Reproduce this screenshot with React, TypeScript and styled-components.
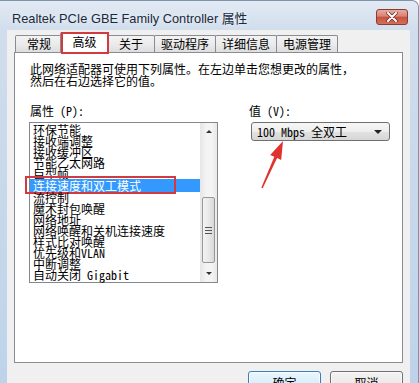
import styled, { createGlobalStyle } from 'styled-components';

const GlobalStyles = createGlobalStyle`
  body {
    margin: 0;
    background: #ffffff;
  }
`;

const uiFont = `"Noto Sans Mono CJK SC", "Noto Sans CJK SC", "Liberation Mono", monospace`;

const Window = styled.div`
  width: 419px;
  height: 383px;
  box-sizing: border-box;
  overflow: hidden;
  display: flex;
  flex-direction: column;
  border-top: 1px solid #7f93ad;
  border-right: 1px solid #7f93ad;
  border-top-right-radius: 7px;
  background: linear-gradient(to bottom, #e2eaf4 0px, #d0ddec 30px, #bed3ea 100%);
  font-family: ${uiFont};
`;

const TitleBar = styled.div`
  flex: none;
  height: 29px;
  box-sizing: border-box;
  padding: 3px 10px 0 12px;
  display: flex;
  align-items: center;
  justify-content: space-between;
`;

const Caption = styled.span`
  font-family: "Liberation Sans", "Noto Sans CJK SC", sans-serif;
  font-size: 12.8px;
  color: #1b2a3d;
  text-shadow: 0 0 6px rgba(255, 255, 255, 0.9);
`;

const CloseButton = styled.div`
  width: 32px;
  height: 16px;
  box-sizing: border-box;
  border: 1px solid #8c3a33;
  border-radius: 3px;
  background: linear-gradient(to bottom, #e8aaa0 0%, #d98373 45%, #c6503d 50%, #d66f59 100%);
  display: flex;
  align-items: center;
  justify-content: center;
`;

const Client = styled.div`
  flex: 1;
  margin: 0 8px 0 7px;
  background: #f0f0f0;
  display: flex;
  flex-direction: column;
`;

const TabRow = styled.div`
  height: 22px;
  flex: none;
  padding-left: 8px;
  display: flex;
  align-items: flex-end;
  position: relative;
  z-index: 1;
`;

const Tab = styled.div<{ $active?: boolean; $marked?: boolean }>`
  position: relative;
  box-sizing: border-box;
  min-width: ${p => (p.$active ? '49px' : '48px')};
  height: ${p => (p.$active ? '21px' : '17px')};
  margin: ${p => (p.$active ? '0 -2px -1px -2px' : '0 -1px 0 0')};
  padding: 0 6px;
  border: 1px solid #898c95;
  border-bottom: none;
  border-radius: 2px 2px 0 0;
  background: ${p =>
    p.$active ? '#ffffff' : 'linear-gradient(to bottom, #f3f3f3 0%, #ebebeb 50%, #dedede 100%)'};
  z-index: ${p => (p.$active ? 2 : 0)};
  font-size: 12px;
  line-height: ${p => (p.$active ? '18px' : '15px')};
  text-align: center;
  color: #000;
  white-space: nowrap;

  ${p =>
    p.$marked &&
    `
    &::after {
      content: '';
      position: absolute;
      top: -1px;
      left: 0;
      right: -1px;
      bottom: -1px;
      border: 2px solid #d23a3f;
    }
  `}
`;

const Panel = styled.div`
  height: 311px;
  flex: none;
  box-sizing: border-box;
  margin: 0 7px;
  border: 1px solid #898c95;
  background: #ffffff;
  padding: 10px 14px 0 15px;
`;

const Description = styled.p`
  margin: 0;
  font-size: 12px;
  line-height: 12px;
  color: #000;
  white-space: nowrap;
`;

const Fields = styled.div`
  margin-top: 18px;
  display: grid;
  grid-template-columns: 188px 1fr;
  column-gap: 31px;
`;

const Column = styled.div`
  position: relative;
  display: flex;
  flex-direction: column;
  gap: 5px;
`;

const FieldLabel = styled.div`
  font-size: 12px;
  line-height: 12px;
  color: #000;
`;

const ListBox = styled.div`
  margin-left: -1px;
  height: 161px;
  box-sizing: border-box;
  border: 1px solid #828790;
  background: #fff;
  display: flex;
`;

const Items = styled.div`
  flex: 1;
  padding-top: 1px;
`;

const Item = styled.div<{ $selected?: boolean; $marked?: boolean }>`
  position: relative;
  height: ${p => (p.$selected ? '13px' : '11px')};
  line-height: ${p => (p.$selected ? '13px' : '11px')};
  padding-left: 3px;
  font-size: 12px;
  white-space: nowrap;
  color: ${p => (p.$selected ? '#ffffff' : '#000000')};
  background: ${p => (p.$selected ? '#3399ff' : 'transparent')};

  ${p =>
    p.$marked &&
    `
    &::after {
      content: '';
      position: absolute;
      top: -3px;
      bottom: -2px;
      left: -5px;
      right: 24px;
      border: 2px solid #d23a3f;
    }
  `}
`;

const ScrollBar = styled.div`
  width: 17px;
  flex: none;
  display: flex;
  flex-direction: column;
  background: linear-gradient(to right, #e6e6e6 0%, #f4f4f4 40%, #f4f4f4 70%, #e8e8e8 100%);
`;

const ScrollArrow = styled.div<{ $down?: boolean }>`
  height: 17px;
  flex: none;
  display: flex;
  align-items: center;
  justify-content: center;

  &::before {
    content: '';
    width: 0;
    height: 0;
    border-left: 3px solid transparent;
    border-right: 3px solid transparent;
    ${p => (p.$down ? 'border-top: 3px solid #333;' : 'border-bottom: 3px solid #333;')}
  }
`;

const Track = styled.div`
  flex: 1;
  padding-top: 57px;
`;

const Thumb = styled.div`
  margin: 0 2px;
  height: 66px;
  box-sizing: border-box;
  border: 1px solid #979797;
  border-radius: 2px;
  background: linear-gradient(to right, #f3f3f3 0%, #e9e9e9 50%, #d8d8d8 100%);
  display: flex;
  flex-direction: column;
  align-items: center;
  justify-content: center;
  gap: 2px;
`;

const Grip = styled.div`
  width: 7px;
  height: 1px;
  background: #555;
`;

const Combo = styled.div`
  margin-left: 2px;
  width: 139px;
  height: 19px;
  box-sizing: border-box;
  border: 1px solid #707070;
  border-radius: 3px;
  background: linear-gradient(to bottom, #f6f6f6 0%, #eeeeee 50%, #e2e2e2 51%, #d6d6d6 100%);
  padding: 0 7px 0 5px;
  display: flex;
  align-items: center;
  justify-content: space-between;
  font-size: 12px;
  color: #000;
`;

const ComboArrow = styled.span`
  width: 0;
  height: 0;
  border-left: 4px solid transparent;
  border-right: 4px solid transparent;
  border-top: 4px solid #222;
`;

const Annotation = styled.svg`
  position: absolute;
  left: 6px;
  top: 33px;
`;

const ButtonRow = styled.div`
  margin-top: 8px;
  padding-right: 7px;
  display: flex;
  justify-content: flex-end;
  gap: 9px;
`;

const Button = styled.div<{ $default?: boolean }>`
  width: 73px;
  height: 23px;
  box-sizing: border-box;
  border: 1px solid ${p => (p.$default ? '#3c7fb1' : '#707070')};
  border-radius: 3px;
  background: ${p =>
    p.$default
      ? 'linear-gradient(to bottom, #eaf6fd 0%, #d9f0fc 50%, #bee6fd 51%, #a7d9f5 100%)'
      : 'linear-gradient(to bottom, #f2f2f2 0%, #ebebeb 50%, #dddddd 51%, #cfcfcf 100%)'};
  box-shadow: inset 0 0 0 1px rgba(255, 255, 255, 0.7);
  display: flex;
  align-items: center;
  justify-content: center;
  font-size: 12px;
  color: #000;
`;

const properties = [
  '环保节能',
  '接收端调整',
  '接收缓冲区',
  '节能乙太网路',
  '巨型帧',
  '连接速度和双工模式',
  '流控制',
  '魔术封包唤醒',
  '网络地址',
  '网络唤醒和关机连接速度',
  '样式比对唤醒',
  '优先级和VLAN',
  '中断调整',
  '自动关闭 Gigabit',
];

const selected = '连接速度和双工模式';

const tabs = ['常规', '高级', '关于', '驱动程序', '详细信息', '电源管理'];

const App = () => {
  return (
    <Window>
      <GlobalStyles />
      <TitleBar>
        <Caption>Realtek PCIe GBE Family Controller 属性</Caption>
        <CloseButton>
          <svg width="12" height="10" viewBox="0 0 12 10">
            <path d="M2 1 L10 9 M10 1 L2 9" stroke="#6b2a22" strokeWidth="3.4" strokeLinecap="round" />
            <path d="M2 1 L10 9 M10 1 L2 9" stroke="#ffffff" strokeWidth="2" strokeLinecap="round" />
          </svg>
        </CloseButton>
      </TitleBar>
      <Client>
        <TabRow>
          {tabs.map(t => (
            <Tab key={t} $active={t === '高级'} $marked={t === '高级'}>
              {t}
            </Tab>
          ))}
        </TabRow>
        <Panel>
          <Description>
            此网络适配器可使用下列属性。在左边单击您想更改的属性，
            <br />
            然后在右边选择它的值。
          </Description>
          <Fields>
            <Column>
              <FieldLabel>属性 (P):</FieldLabel>
              <ListBox>
                <Items>
                  {properties.map(p => (
                    <Item key={p} $selected={p === selected} $marked={p === selected}>
                      {p}
                    </Item>
                  ))}
                </Items>
                <ScrollBar>
                  <ScrollArrow />
                  <Track>
                    <Thumb>
                      <Grip />
                      <Grip />
                      <Grip />
                    </Thumb>
                  </Track>
                  <ScrollArrow $down />
                </ScrollBar>
              </ListBox>
            </Column>
            <Column>
              <FieldLabel>值 (V):</FieldLabel>
              <Combo>
                <span>100 Mbps 全双工</span>
                <ComboArrow />
              </Combo>
              <Annotation width="40" height="56" viewBox="0 0 40 56">
                <polygon
                  points="28,3 26.2,21.9 22.1,20 7.7,50.3 6.3,49.7 19.3,18.8 15.2,16.9"
                  fill="#e0322f"
                />
              </Annotation>
            </Column>
          </Fields>
        </Panel>
        <ButtonRow>
          <Button $default>确定</Button>
          <Button>取消</Button>
        </ButtonRow>
      </Client>
    </Window>
  );
};

export default App;
